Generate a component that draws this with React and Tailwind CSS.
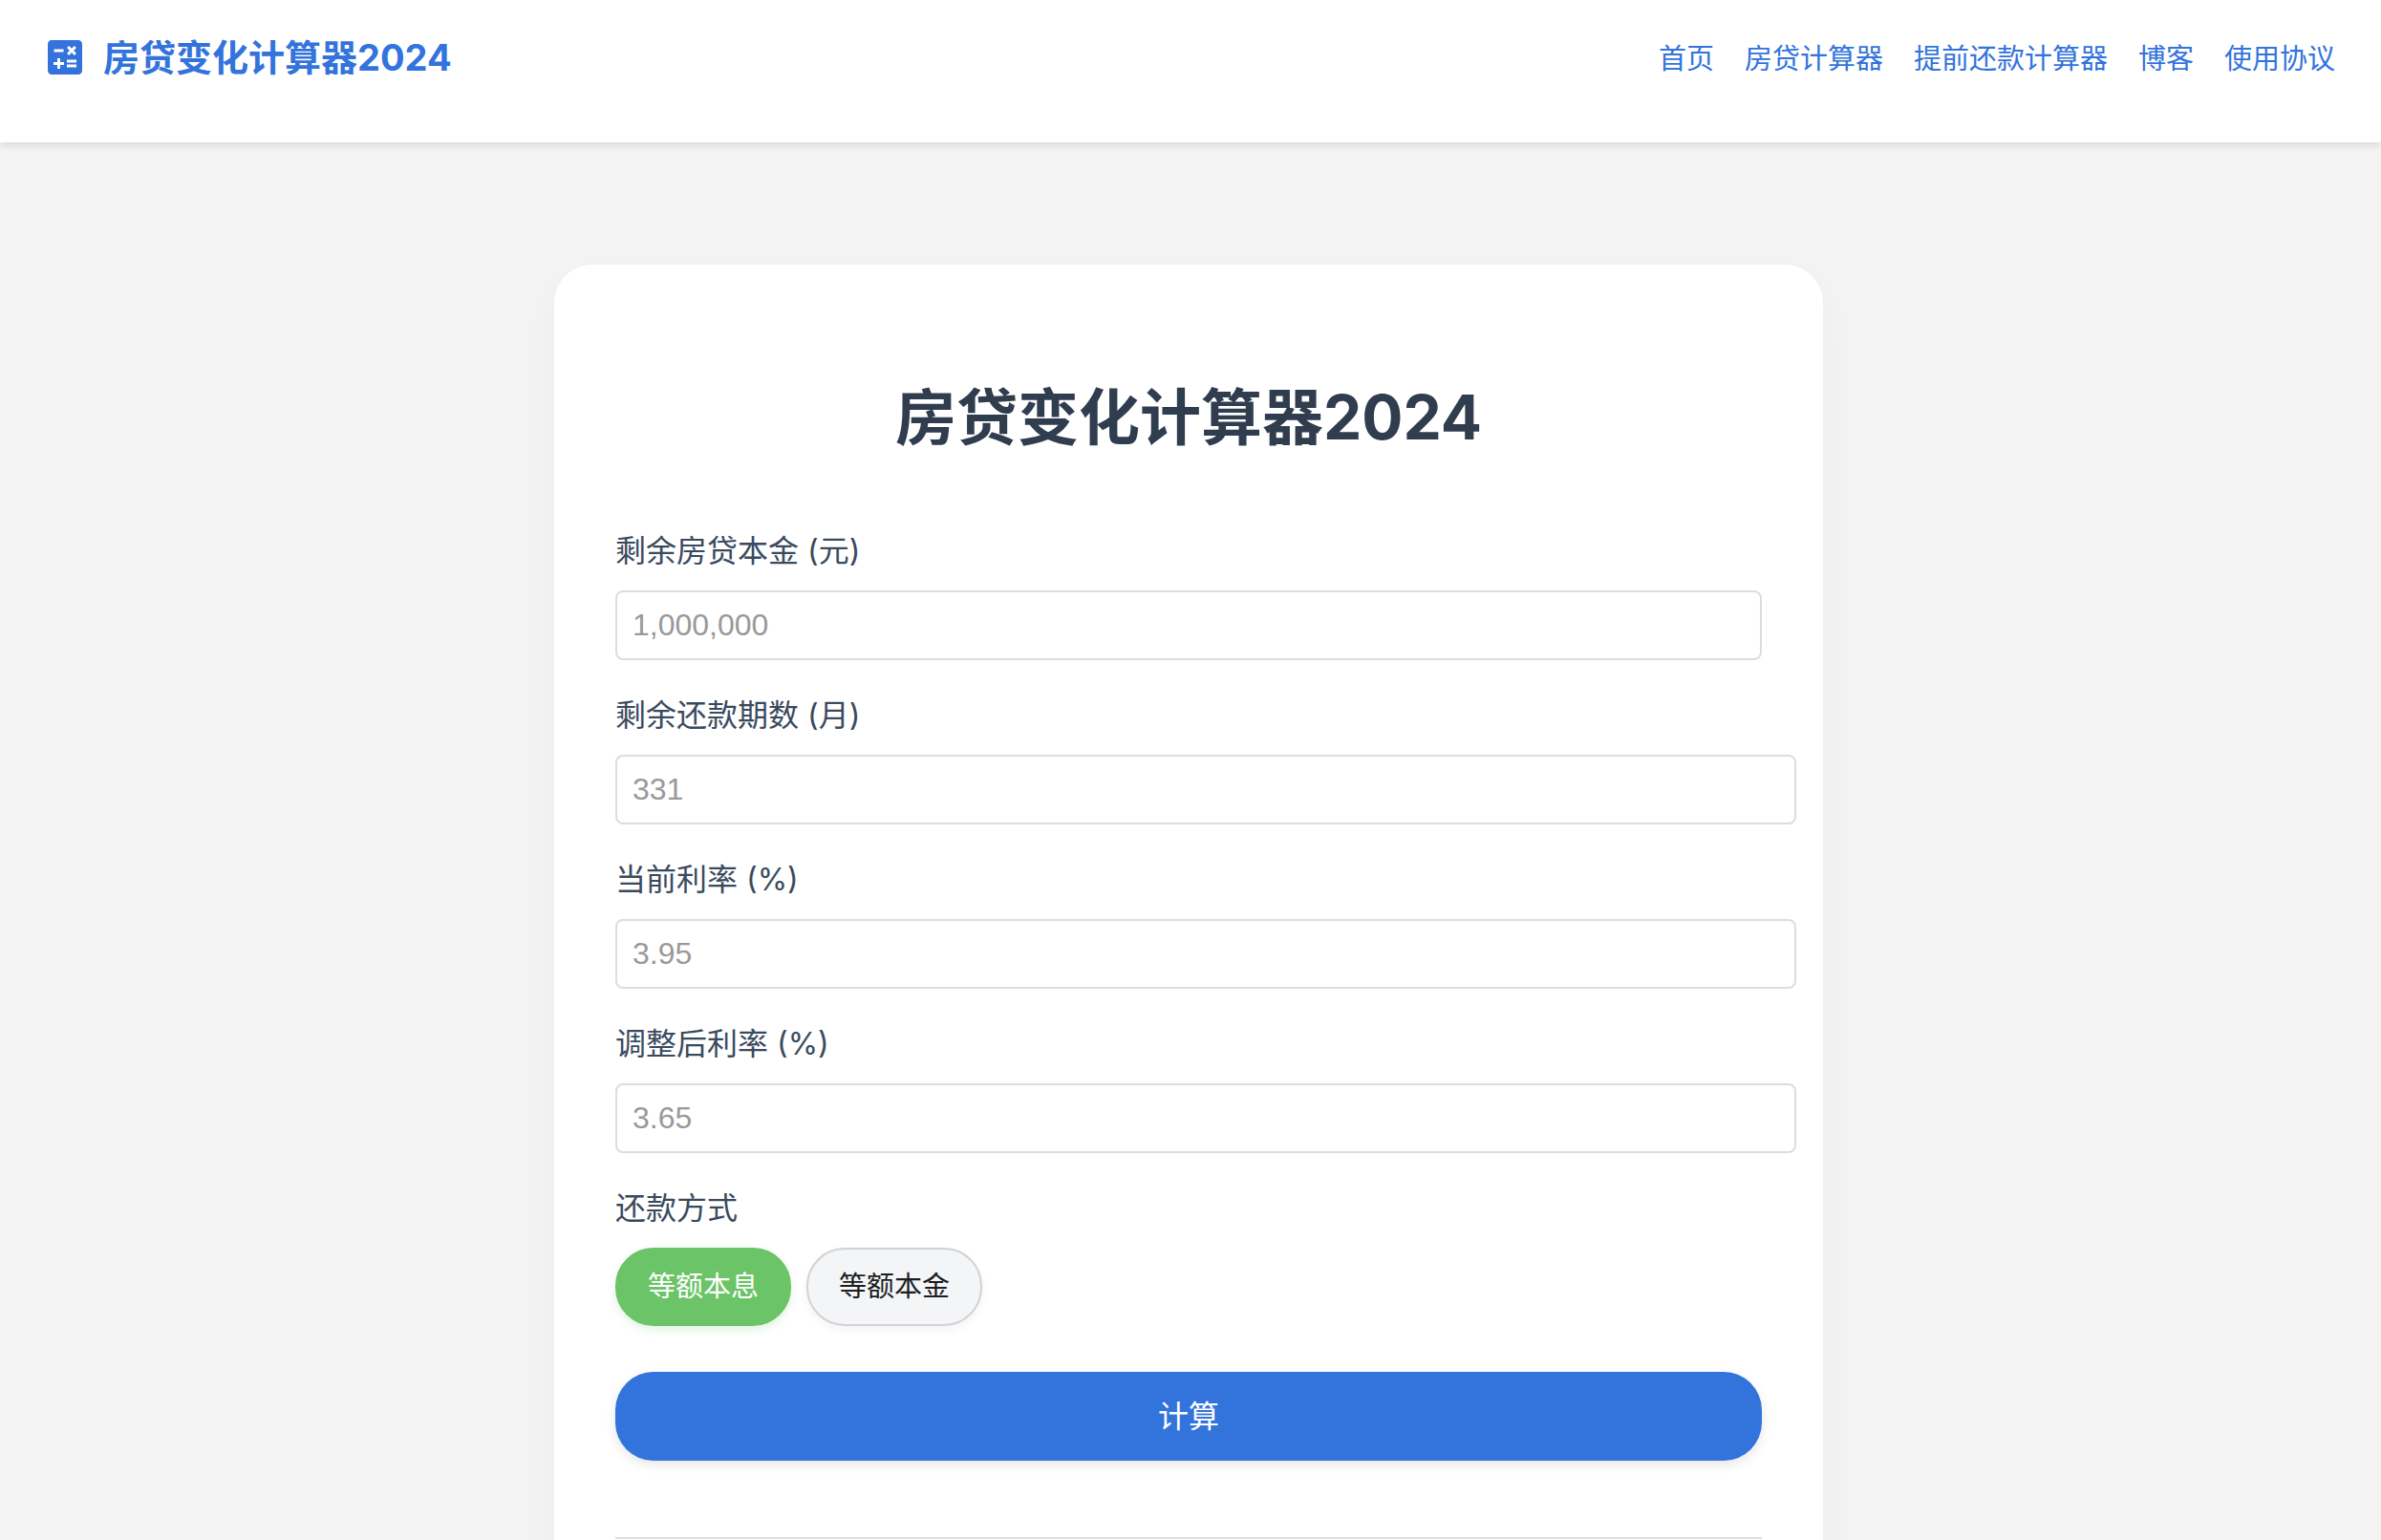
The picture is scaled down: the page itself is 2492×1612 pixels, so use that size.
import React, { useState } from 'react';
import { MdCalculate } from 'react-icons/md';

const NAV_LINKS = [
  { label: '首页', href: '#home' },
  { label: '房贷计算器', href: '#mortgage' },
  { label: '提前还款计算器', href: '#prepay' },
  { label: '博客', href: '#blog' },
  { label: '使用协议', href: '#terms' }
];

const FIELDS = [
  { name: 'principal', label: '剩余房贷本金 (元)', placeholder: '1,000,000', type: 'text', width: 'w-full' },
  { name: 'months', label: '剩余还款期数 (月)', placeholder: '331', type: 'number', width: 'w-[calc(100%+36px)]' },
  { name: 'currentRate', label: '当前利率 (%)', placeholder: '3.95', type: 'number', width: 'w-[calc(100%+36px)]' },
  { name: 'newRate', label: '调整后利率 (%)', placeholder: '3.65', type: 'number', width: 'w-[calc(100%+36px)]' }
];

const METHODS = ['等额本息', '等额本金'];

// first month payment
function firstPayment(principal, months, rate, method) {
  const r = rate / 1200;
  if (method === '等额本金') return principal / months + principal * r;
  if (r === 0) return principal / months;
  const pow = Math.pow(1 + r, months);
  return (principal * r * pow) / (pow - 1);
}

function Header() {
  return (
    <header className="relative bg-white shadow-[0_4px_8px_rgba(0,0,0,0.1)] flex items-start justify-between pl-11 pr-12 pt-9 pb-[63px] text-[#3273dc]">
      <a href="#home" className="flex items-center gap-4 text-[38px] leading-12 font-bold">
        <MdCalculate size={48} />
        房贷变化计算器2024
      </a>
      <nav className="flex gap-8 pt-0.5 text-[29px] leading-12">
        {NAV_LINKS.map((link) => (
          <a key={link.label} href={link.href} className="hover:underline">{link.label}</a>
        ))}
      </nav>
    </header>
  );
}

export default function App() {
  const [form, setForm] = useState({ principal: '', months: '', currentRate: '', newRate: '' });
  const [method, setMethod] = useState(METHODS[0]);
  const [result, setResult] = useState(null);

  const handleSubmit = (e) => {
    e.preventDefault();
    const principal = Number(form.principal.replace(/,/g, ''));
    const months = Number(form.months);
    if (!principal || !months) return;
    setResult({
      before: firstPayment(principal, months, Number(form.currentRate), method),
      after: firstPayment(principal, months, Number(form.newRate), method)
    });
  };

  return (
    <div className="min-h-screen bg-[#f4f4f4] font-[Inter,'Noto_Sans_CJK_SC',sans-serif]" lang="zh-CN">
      <Header />
      <main className="pt-32 pr-1">
        <div className="mx-auto w-full max-w-[1328px] rounded-[40px] bg-white p-16 shadow-[0_16px_60px_rgba(0,0,0,0.04)]">
          <h1 className="mt-11 mb-[62px] text-center text-[64px] leading-[104px] font-bold text-[#303d4f]">房贷变化计算器2024</h1>

          <form onSubmit={handleSubmit}>
            {FIELDS.map((field) => (
              <div key={field.name} className="mb-8">
                <label htmlFor={field.name} className="block mb-4 text-[32px] leading-[51px] text-[#3a4a5e]">{field.label}</label>
                <input
                  id={field.name}
                  type={field.type}
                  step="any"
                  placeholder={field.placeholder}
                  value={form[field.name]}
                  onChange={(e) => setForm({ ...form, [field.name]: e.target.value })}
                  className={`block ${field.width} rounded-lg border-2 border-[#dddddd] bg-white p-4 font-['Liberation_Sans',sans-serif] text-[32px] leading-[37px] h-[73px] placeholder:text-[#999999] focus:outline-none focus:border-[#3273dc]`}
                />
              </div>
            ))}

            <div role="group" aria-labelledby="method-label">
              <span id="method-label" className="block mb-4 text-[32px] leading-[51px] text-[#3a4a5e]">还款方式</span>
              <div className="flex gap-4">
                {METHODS.map((m) => (
                  <button
                    key={m}
                    type="button"
                    aria-pressed={method === m}
                    onClick={() => setMethod(m)}
                    className={`rounded-[40px] border-2 px-8 py-4 text-[29px] leading-[46px] cursor-pointer ${
                      method === m
                        ? 'bg-[#6bc467] border-[#6bc467] text-white shadow-[0_4px_10px_rgba(107,196,103,0.2)]'
                        : 'bg-[#f4f5f7] border-[#d2d2d7] text-[#1d1d1f] shadow-[0_4px_10px_rgba(0,0,0,0.05)]'
                    }`}
                  >
                    {m}
                  </button>
                ))}
              </div>
            </div>

            <button
              type="submit"
              className="mt-12 block w-full rounded-[40px] bg-[#3273dc] py-5 text-[32px] leading-[53px] text-white shadow-[0_4px_12px_rgba(0,0,0,0.1)] cursor-pointer"
            >
              计算
            </button>
          </form>

          <hr className="mt-20 border-t-2 border-[#dddddd]" />
          {result && (
            <p className="mt-8 text-[32px] leading-[51px] text-[#3a4a5e]">
              {result.before.toFixed(2)} → {result.after.toFixed(2)}
            </p>
          )}
        </div>
      </main>
    </div>
  );
}
